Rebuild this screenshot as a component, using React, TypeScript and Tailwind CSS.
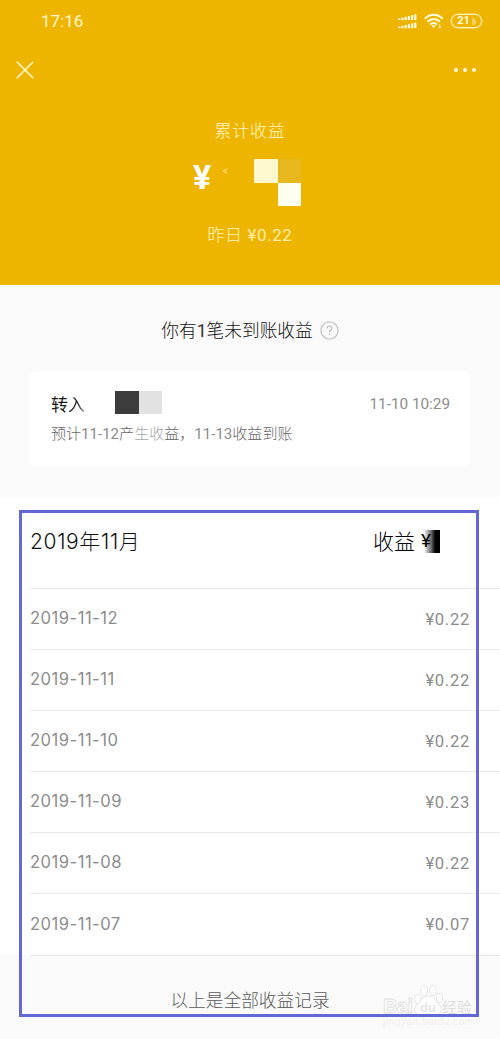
interface IncomeRecord {
  date: string;
  amount: string;
}

const records: IncomeRecord[] = [
  { date: "2019-11-12", amount: "¥0.22" },
  { date: "2019-11-11", amount: "¥0.22" },
  { date: "2019-11-10", amount: "¥0.22" },
  { date: "2019-11-09", amount: "¥0.23" },
  { date: "2019-11-08", amount: "¥0.22" },
  { date: "2019-11-07", amount: "¥0.07" },
];

function SignalIcon() {
  const bars = [0, 1, 2, 3, 4, 5];
  return (
    <svg width="19" height="15" viewBox="0 0 19 15" fill="#fffbe0">
      {bars.map((i) => (
        <g key={i}>
          <rect x={0.2 + i * 3.2} y={4.4 - i * 0.8} width="2.2" height={1.6 + i * 0.8} />
          <rect x={0.2 + i * 3.2} y={12.6 - i * 0.8} width="2.2" height={1.6 + i * 0.8} />
        </g>
      ))}
    </svg>
  );
}

function WifiIcon() {
  return (
    <svg width="20" height="16" viewBox="0 0 20 16" fill="none" stroke="#fffbe0" strokeWidth="2">
      <path d="M0.8 5.8C6 0.4 13.5 0.4 18.7 5.8" />
      <path d="M3.6 8.8C7.2 5 12.3 5 15.9 8.8" />
      <path d="M6.3 11.6C8.5 9.4 11 9.4 13.2 11.6" />
      <path d="M7.8 12.8L9.7 15L11.6 12.8Q9.7 11.4 7.8 12.8Z" fill="#fffbe0" stroke="none" />
      <path d="M15.8 11v4M14.6 13.6l1.2 1.4 1.2-1.4" strokeWidth="0.8" />
    </svg>
  );
}

function StatusBar() {
  return (
    <div className="flex h-[42px] items-center pl-[41px] pr-[18px]">
      <span className="mt-[2px] font-['Roboto','Noto_Sans_CJK_SC',sans-serif] text-[17px] text-[#fff6d0]">
        17:16
      </span>
      <div className="ml-auto flex items-center">
        <SignalIcon />
        <div className="ml-[7px]">
          <WifiIcon />
        </div>
        <div className="ml-[7px] flex h-[14px] w-[31px] items-center justify-center rounded-full border border-[#fff3c0] font-['Roboto',sans-serif] text-[11px] font-bold text-[#fffbe0] shadow-[0_0_0_0.5px_#fbe48f]">
          21
          <span className="ml-[2px] h-[7px] w-[4px] rounded-r-full bg-[#f5d25c]" />
        </div>
      </div>
    </div>
  );
}

function Header() {
  return (
    <header className="h-[285px] bg-[#eeb500]">
      <StatusBar />
      <div className="flex h-[56px] items-center justify-between pl-[16px] pr-[24px]">
        <svg width="18" height="18" viewBox="0 0 18 18" stroke="#fffad8" strokeWidth="1.5">
          <path d="M0.8 0.8L17.2 17.2M17.2 0.8L0.8 17.2" />
        </svg>
        <div className="flex gap-[5px]">
          <span className="size-[4px] rounded-full bg-[#fffbe0]" />
          <span className="size-[4px] rounded-full bg-[#fffbe0]" />
          <span className="size-[4px] rounded-full bg-[#fffbe0]" />
        </div>
      </div>
      <p className="mt-[20px] text-center text-[17px] font-light leading-[24px] tracking-[0.8px] text-[#fff6c8]">
        累计收益
      </p>
      <div className="mt-[17px] flex h-[47px] pl-[193px]">
        <span className="w-[19px] font-['Roboto','Noto_Sans_CJK_SC',sans-serif] text-[34px] font-bold leading-[36px] text-white">
          ¥
        </span>
        <svg className="ml-[9px] mt-[8px]" width="9" height="8" viewBox="0 0 9 8" fill="#f9dc78">
          <path d="M0.5 4L7 0.5L5.5 3.5L6 7Z" opacity="0.7" />
        </svg>
        <div className="ml-[24px] grid h-[47px] w-[47px] grid-cols-2 grid-rows-2">
          <span className="bg-[#fff8cf]" />
          <span className="bg-[#e7b81e]" />
          <span />
          <span className="bg-[#fffff0]" />
        </div>
      </div>
      <p className="mt-[17px] text-center font-['Roboto','Noto_Sans_CJK_SC',sans-serif] text-[17px] font-light leading-[24px] tracking-[0.6px] text-[#fff6c8]">
        昨日 <span className="font-normal text-[#fdedaa]">¥0.22</span>
      </p>
    </header>
  );
}

function PendingIncome() {
  return (
    <section className="h-[212px] px-[30px] pt-[33px]">
      <div className="flex h-[24px] items-center justify-center text-[17.7px] font-light text-[#111]">
        <span>
          你有<span className="font-['Roboto',sans-serif] font-normal text-[#333]">1</span>笔未到账收益
        </span>
        <svg className="ml-[7px]" width="19" height="19" viewBox="0 0 19 19" fill="none" stroke="#c6c6c6">
          <circle cx="9.5" cy="9.5" r="8.6" strokeWidth="1.4" />
          <path d="M7 7.6C7 4.3 12 4.4 12 7.3C12 9.2 9.5 9 9.5 11.2M9.5 12.6V14" strokeWidth="1.4" />
        </svg>
      </div>
      <div className="mt-[29px] h-[95px] rounded-[5px] bg-white pl-[21px] pr-[20px] pt-[20px]">
        <div className="flex h-[24px] items-center">
          <span className="mt-[2px] text-[17px] text-[#1a1a1a]">
            转
            <span className="bg-gradient-to-r from-[#222] from-60% to-[#bbb] bg-clip-text text-transparent">
              入
            </span>
          </span>
          <span className="ml-[30px] mt-[-1px] h-[23px] w-[23.5px] bg-[#3c3c3c]" />
          <span className="mt-[-1px] h-[23px] w-[23.5px] bg-[#e2e2e2]" />
          <span className="ml-auto mt-[2px] font-['Roboto',sans-serif] text-[15.3px] text-[#8c8c8c]">
            11-10 10:29
          </span>
        </div>
        <p className="mt-[7px] whitespace-nowrap font-['Roboto','Noto_Sans_CJK_SC',sans-serif] text-[15.05px] font-light leading-[24px] text-[#666]">
          预计<span className="font-normal text-[#8c8c8c]">11-12</span>产
          <span className="text-[#a8a8a8]">生收</span>益，
          <span className="font-normal text-[#8c8c8c]">11-13</span>收益到账
        </p>
      </div>
    </section>
  );
}

function Watermark() {
  return (
    <div className="absolute left-[381px] top-[982px] h-[48px] w-[95px]">
      <svg width="95" height="48" viewBox="0 0 95 48" fill="#fdfdfd" stroke="#dfdfdf" strokeWidth="0.8">
        <ellipse cx="37" cy="17" rx="3.2" ry="4.6" />
        <ellipse cx="43.2" cy="8.5" rx="3.4" ry="5" />
        <ellipse cx="52" cy="8.5" rx="3.4" ry="5" />
        <ellipse cx="58.5" cy="16" rx="3.2" ry="4.6" />
        <path d="M47 14C41 14 37 22 34 26C32 32 38 34 47 32C56 34 62 32 60 26C57 21 53 14 47 14Z" />
        <g fontFamily="Liberation Sans, sans-serif" fontWeight="700">
          <text x="2" y="31" fontSize="20" textLength="30">Bai</text>
          <text x="39" y="30" fontSize="13" fill="#e6e6e6" stroke="none">du</text>
          <text x="61" y="31" fontSize="15" fontFamily="Noto Sans CJK SC, sans-serif" fontWeight="400" fill="#dedede" stroke="none">经验</text>
          <text x="2" y="43" fontSize="10" stroke="none" fill="#efefef" fontWeight="400" textLength="90">jingyan.baidu.com</text>
        </g>
      </svg>
    </div>
  );
}

function IncomeList() {
  return (
    <section className="bg-white pl-[30px] pt-[30px]">
      <div className="flex h-[61px] items-start justify-between pr-[60px]">
        <h2 className="font-['Inter','Noto_Sans_CJK_SC',sans-serif] text-[21px] font-light leading-[30px] tracking-[0.65px] text-[#111]">
          2019年11月
        </h2>
        <div className="flex items-center text-[21px] font-light leading-[30px] text-black">
          <span className="mt-[-2px]">收益</span>
          <span className="ml-[6px] flex h-[23px] w-[19px] items-center bg-gradient-to-r from-white from-15% via-[#666] via-55% to-black to-80% font-['Roboto',sans-serif] text-[19px] font-normal text-black">
            ¥
          </span>
        </div>
      </div>
      <ul>
        {records.map((record) => (
          <li
            key={record.date}
            className="flex h-[61.1px] items-center justify-between border-t border-[#ebebeb] pr-[30px]"
          >
            <span className="mt-[-1px] font-['Inter',sans-serif] text-[16.6px] tracking-[0.48px] text-[#8c8c8c]">
              {record.date}
            </span>
            <span className="mt-[2px] font-['Roboto',sans-serif] text-[16.6px] tracking-[0.7px] text-[#8c8c8c]">
              {record.amount}
            </span>
          </li>
        ))}
      </ul>
    </section>
  );
}

export default function App() {
  return (
    <main className="relative h-[1039px] w-[500px] overflow-hidden bg-[#fafafa] font-['Noto_Sans_CJK_SC',sans-serif]">
      <Header />
      <PendingIncome />
      <IncomeList />
      <footer className="ml-[30px] border-t border-[#e8e8e8] pr-[30px] pt-[31px] text-center text-[17.7px] font-light leading-[24px] text-[#5a5a5a]">
        以上是全部收益记录
      </footer>
      <Watermark />
      <div className="pointer-events-none absolute left-[19px] top-[510px] h-[507px] w-[460px] border-[3px] border-[#6368d6]" />
    </main>
  );
}
